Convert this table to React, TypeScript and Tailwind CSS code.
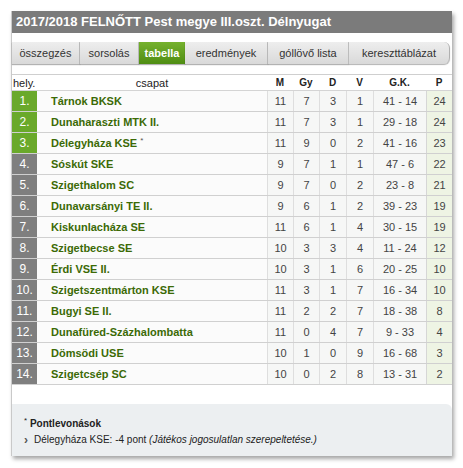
import React from "react";

type Row = [string, number, number, number, number, string, number];

const rows: Row[] = [
  ["Tárnok BKSK", 11, 7, 3, 1, "41 - 14", 24],
  ["Dunaharaszti MTK II.", 11, 7, 3, 1, "29 - 18", 24],
  ["Délegyháza KSE", 11, 9, 0, 2, "41 - 16", 23],
  ["Sóskút SKE", 9, 7, 1, 1, "47 - 6", 22],
  ["Szigethalom SC", 9, 7, 0, 2, "23 - 8", 21],
  ["Dunavarsányi TE II.", 9, 6, 1, 2, "39 - 23", 19],
  ["Kiskunlacháza SE", 11, 6, 1, 4, "30 - 15", 19],
  ["Szigetbecse SE", 10, 3, 3, 4, "11 - 24", 12],
  ["Érdi VSE II.", 10, 3, 1, 6, "20 - 25", 10],
  ["Szigetszentmárton KSE", 11, 3, 1, 7, "16 - 34", 10],
  ["Bugyi SE II.", 11, 2, 2, 7, "18 - 38", 8],
  ["Dunafüred-Százhalombatta", 11, 0, 4, 7, "9 - 33", 4],
  ["Dömsödi USE", 10, 1, 0, 9, "16 - 68", 3],
  ["Szigetcsép SC", 10, 0, 2, 8, "13 - 31", 2],
];

const tabs = [
  { label: "összegzés", w: "w-[68px]" },
  { label: "sorsolás", w: "w-[59px]" },
  { label: "tabella", w: "w-[46px]", active: true },
  { label: "eredmények", w: "w-[83px]" },
  { label: "góllövő lista", w: "w-[81px]" },
  { label: "kereszttáblázat", w: "w-[101px]", last: true },
];

const cols = "grid grid-cols-[25px_230px_26px_26px_27px_27px_53px_26px]";

export default function App() {
  return (
    <div className="w-[463px] h-[468px] bg-white pt-[11px] pl-[11px] font-['Liberation_Sans',Arial,sans-serif]">
      <div className="w-[441px] border-l border-[#c9c9c9] bg-white shadow-[2px_3px_4px_rgba(0,0,0,0.35)]">
        <div className="h-[22px] bg-[#7b7b7b] text-white font-bold text-[13px] leading-[22px] pl-[4px]">
          2017/2018 FELNŐTT Pest megye III.oszt. Délnyugat
        </div>

        <div className="flex mt-[9px] h-[22px]">
          {tabs.map((t) =>
            t.active ? (
              <div
                key={t.label}
                className={`${t.w} bg-gradient-to-b from-[#76b22e] to-[#4f8d12] text-white font-bold text-[11px] leading-[22px] text-center shadow-[0_1px_1px_rgba(0,0,0,0.3)]`}
              >
                {t.label}
              </div>
            ) : (
              <div
                key={t.label}
                className={`${t.w} bg-gradient-to-b from-[#eeeeee] to-[#d9d9d9] border-r border-[#c2c2c2] text-[#333] text-[11px] leading-[22px] text-center shadow-[0_1px_1px_rgba(0,0,0,0.3)] ${t.last ? "rounded-r-[6px] border-r-[#b0b0b0]" : ""}`}
              >
                {t.label}
              </div>
            )
          )}
        </div>

        <div className="mt-[10px] border-t border-[#cfcfcf] w-[440px]">
          <div className={`${cols} h-[16px] text-[10px] leading-[16px] font-bold text-[#222] border-b border-[#d4d4d4]`}>
            <div className="font-normal text-[11px] pl-[1px]">hely.</div>
            <div className="font-normal text-[11px] text-center">csapat</div>
            <div className="text-center">M</div>
            <div className="text-center">Gy</div>
            <div className="text-center">D</div>
            <div className="text-center">V</div>
            <div className="text-center">G.K.</div>
            <div className="text-center">P</div>
          </div>
          {rows.map((r, i) => (
            <div
              key={r[0]}
              className={`${cols} h-[21px] text-[11px] leading-[20px] border-b border-[#d0d0d0]`}
            >
              <div
                className={`text-center text-[12px] text-white ${i < 3 ? "bg-[#6aa92b]" : "bg-[#7f7f7f]"}`}
              >
                {i + 1}.
              </div>
              <div className="bg-[#fbfbfb] pl-[14px] font-bold text-[#3b6a06]">
                {r[0]}
                {i === 2 && <sup className="text-[8px] text-[#555] font-normal ml-[3px]">*</sup>}
              </div>
              {[r[1], r[2], r[3], r[4], r[5]].map((v, j) => (
                <div
                  key={j}
                  className="text-center text-[#444] bg-[#f6f7f6] border-l border-[#dedede]"
                >
                  {v}
                </div>
              ))}
              <div className="text-center text-[#444] bg-[#eef4e4] border-l border-[#d6d6d6]">
                {r[6]}
              </div>
            </div>
          ))}
        </div>

        <div className="mt-[19px] h-[52px] bg-[#eceff1] rounded-tr-[6px] pt-[12px] pl-[12px] text-[10px] text-[#222]">
          <div className="leading-[16px]">
            <sup className="text-[8px]">*</sup> <span className="font-bold">Pontlevonások</span>
          </div>
          <div className="leading-[16px] flex items-center">
            <span className="font-bold text-[#555] text-[12px] mr-[6px]">›</span>
            <span>
              Délegyháza KSE: -4 pont <i>(Játékos jogosulatlan szerepeltetése.)</i>
            </span>
          </div>
        </div>
      </div>
    </div>
  );
}
